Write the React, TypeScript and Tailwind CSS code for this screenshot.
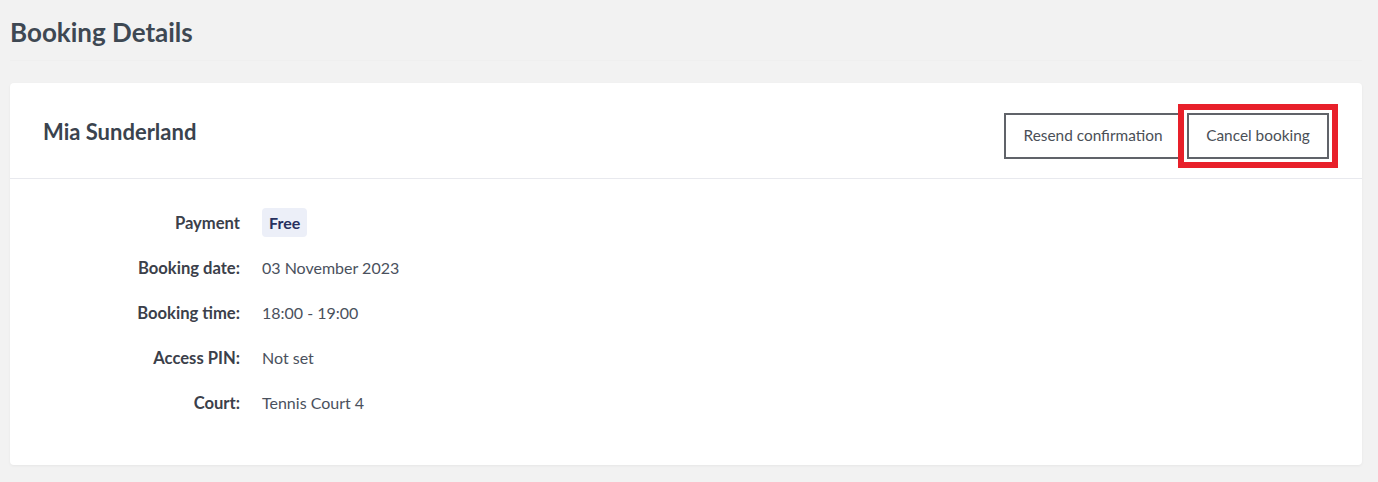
import React from "react";

const rows: { label: string; value: React.ReactNode }[] = [
  {
    label: "Payment",
    value: (
      <span className="inline-flex h-[29px] items-center rounded-[4px] bg-[#eceff8] px-[7px] font-bold text-[#27305e]">
        Free
      </span>
    ),
  },
  { label: "Booking date:", value: "03 November 2023" },
  { label: "Booking time:", value: "18:00 - 19:00" },
  { label: "Access PIN:", value: "Not set" },
  { label: "Court:", value: "Tennis Court 4" },
];

export default function App() {
  return (
    <div
      className="min-h-[482px] bg-[#f2f2f2] pl-[10px] pr-[16px]"
      style={{ fontFamily: "Lato, 'Open Sans', sans-serif" }}
    >
      <div className="border-b border-[#efefef] pt-[15px] pb-[11px]">
        <h1 className="text-[26px] font-bold leading-[34px] text-[#3e4853]">Booking Details</h1>
      </div>
      <div className="mt-[22px] rounded-[4px] bg-white shadow-[0_1px_3px_rgba(0,0,0,0.05)]">
        <div className="flex h-[96px] items-start justify-between border-b border-[#e8e9ee] pl-[33px] pr-[33px] pt-[30px]">
          <h2 className="mt-[4px] text-[22px] font-bold leading-[30px] text-[#3a434e]">Mia Sunderland</h2>
          <div className="flex gap-[7px]">
            <button className="h-[46px] w-[176px] border-2 border-[#606369] bg-white pl-[2px] text-[15.4px] text-[#4a4f57]">
              Resend confirmation
            </button>
            <button className="h-[46px] w-[142px] border-2 border-[#606369] bg-white text-[15.4px] text-[#4a4f57] outline-[6px] outline-offset-[3px] outline-[#e8202a] [outline-style:solid]">
              Cancel booking
            </button>
          </div>
        </div>
        <div className="pl-[33px] pt-[21px] pb-[40px]">
          {rows.map((r) => (
            <div key={r.label} className="flex h-[45px] items-center">
              <div className="flex items-baseline">
                <div className="w-[197px] text-right text-[16.6px] font-bold leading-[24px] text-[#3b404a]">
                  {r.label}
                </div>
                <div className="ml-[22px] text-[16px] leading-[24px] text-[#4a515d]">{r.value}</div>
              </div>
            </div>
          ))}
        </div>
      </div>
    </div>
  );
}
